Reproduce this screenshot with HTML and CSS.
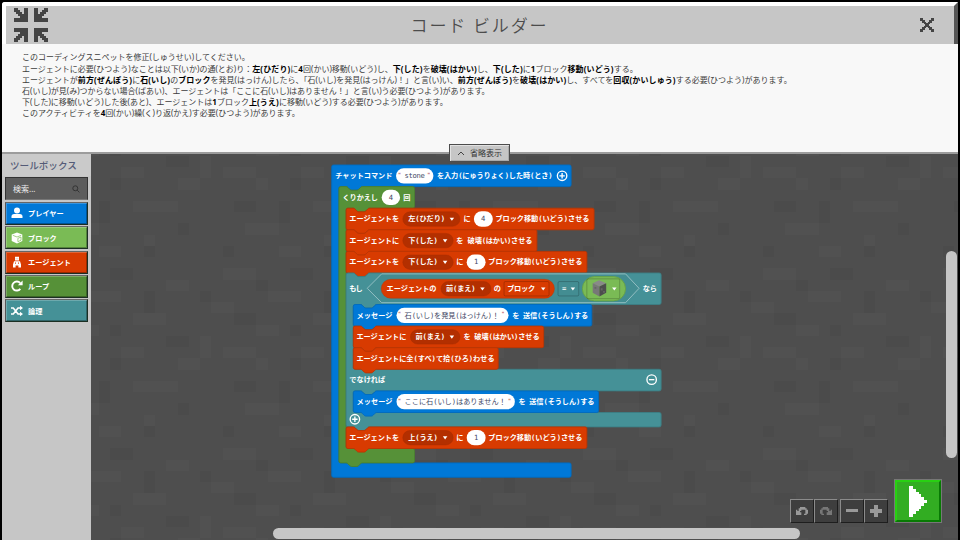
FILE: index.html
```
<!DOCTYPE html>
<html lang="ja">
<head>
<meta charset="utf-8">
<title>コード ビルダー</title>
<link rel="stylesheet" href="styles.css">
</head>
<body>
<div class="window">
  <header class="header">
    <svg class="shrink" viewBox="0 0 17 17" shape-rendering="crispEdges">
      <defs><path id="arrow" d="M0 0H2V1H3V2H4V3H5V0H7V7H0V5H3V4H2V3H1V2H0Z"/></defs>
      <use href="#arrow"/><use href="#arrow" transform="matrix(-1 0 0 1 17 0)"/>
      <use href="#arrow" transform="matrix(1 0 0 -1 0 17)"/><use href="#arrow" transform="matrix(-1 0 0 -1 17 17)"/>
    </svg>
    <h1 class="title">コード ビルダー</h1>
    <svg class="close" viewBox="0 0 14 14"><path d="M0 0H3V2H5V4H6V5H8V4H9V2H11V0H14V3H12V5H10V6H9V8H10V9H12V11H14V14H11V12H9V10H8V9H6V10H5V12H3V14H0V11H2V9H4V8H5V6H4V5H2V3H0Z"/></svg>
  </header>
  <section class="hint">
    <p>このコーディングスニペットを修正(しゅうせい)してください。</p>
    <p>エージェントに必要(ひつよう)なことは以下(いか)の通(とお)り：<b>左(ひだり)</b>に<b>4</b>回(かい)移動(いどう)し、<b>下(した)</b>を<b>破壊(はかい)</b>し、<b>下(した)</b>に<b>1</b>ブロック<b>移動(いどう)</b>する。</p>
    <p>エージェントが<b>前方(ぜんぽう)</b>に<b>石(いし)</b>の<b>ブロック</b>を発見(はっけん)したら、「石(いし)を発見(はっけん)！」と言(い)い、<b>前方(ぜんぽう)</b>を<b>破壊(はかい)</b>し、すべてを<b>回収(かいしゅう)</b>する必要(ひつよう)があります。</p>
    <p>石(いし)が見(み)つからない場合(ばあい)、エージェントは「ここに石(いし)はありません！」と言(い)う必要(ひつよう)があります。</p>
    <p>下(した)に移動(いどう)した後(あと)、エージェントは<b>1</b>ブロック<b>上(うえ)</b>に移動(いどう)する必要(ひつよう)があります。</p>
    <p>このアクティビティを<b>4</b>回(かい)繰(く)り返(かえ)す必要(ひつよう)があります。</p>
    <button class="collapse"><svg viewBox="0 0 8 5"><path d="M1 4L4 1L7 4"/></svg>省略表示</button>
  </section>
  <main class="editor">
    <aside class="toolbox">
      <h2>ツールボックス</h2>
      <div class="search"><span>検索...</span><svg viewBox="0 0 9 9"><circle cx="3.7" cy="3.7" r="2.8"/><path d="M5.8 5.8L8.3 8.3"/></svg></div>
      <button class="cat player"><svg viewBox="0 0 12 12"><circle cx="6" cy="3.6" r="3"/><path d="M.5 11V9.5Q.5 7 3.2 7H8.8Q11.5 7 11.5 9.5V11Z"/></svg>プレイヤー</button>
      <button class="cat blocks"><svg viewBox="0 0 12 12"><path d="M6 .5L11.3 2.6V9L6 11.6L.7 9V2.6Z"/><path class="cut" d="M1.8 3.3L6 5L10.2 3.3M6.9 6.3L10 5V8.2L6.9 9.7Z"/></svg>ブロック</button>
      <button class="cat agent"><svg viewBox="0 0 12 12"><path d="M4 .8H8V4.6H4ZM3 5.2H9L10 8.6V11.6H7.4V9.4H4.6V11.6H2V8.6Z"/><path class="cut" d="M4.8 2.8H5.4M6.6 2.8H7.2M4.5 6.3V8M7.5 6.3V8"/></svg>エージェント</button>
      <button class="cat loops"><svg viewBox="0 0 12 12"><path class="line" d="M9.3 8.8A4.5 4.5 0 1 1 9.2 3.2"/><path d="M11.6 .6V5.3H6.9Z"/></svg>ループ</button>
      <button class="cat logic"><svg viewBox="0 0 12 12"><path class="thin" d="M0 3H2.3L7 9H9.4M0 9H2.3L7 3H9.4"/><path d="M9 .8L12 3L9 5.2ZM9 6.8L12 9L9 11.2Z"/></svg>論理</button>
    </aside>
    <div class="workspace">
      <svg class="canvas" viewBox="91 154 867 386">
        <defs>
          <pattern id="stone" patternUnits="userSpaceOnUse" x="560" y="167" width="180" height="180">
            <g transform="scale(11.25)" shape-rendering="crispEdges">
              <path fill="#515151" d="M2 0h3v1H2zM9 0h2v1H9zM5 1h1v1H5zM14 1h2v1h-2zM0 0h1v1H0zM0 15h1v1H0zM10 3h4v1h-4zM4 5h3v1H4zM11 6h1v1h-1zM7 7h2v1H7zM2 9h3v1H2zM13 10h2v1h-2zM6 11h3v1H6zM1 12h2v1H1zM10 13h3v1h-3zM5 14h2v1H5z"/>
              <path fill="#4b4b4b" d="M7 3h1v2H7zM11 7h1v1h-1zM3 3h2v1H3zM14 5h1v1h-1zM2 7h1v1H2zM8 9h2v1H8zM5 10h1v1H5zM0 11h1v1H0zM11 11h1v2h-1zM3 13h2v1H3zM8 14h1v1H8zM13 15h2v1h-2zM8 1h1v1H8z"/>
            </g>
          </pattern>
          <path id="caret" d="M-5-3H5L0 4Z"/>
          <g id="add"><circle r="10.5"/><path d="M-6 0H6M0-6V6"/></g>
        </defs>
        <rect x="91" y="154" width="867" height="386" fill="#4e4e4e"/>
        <rect x="91" y="154" width="867" height="386" fill="url(#stone)"/>
        <g transform="translate(331.7 165) scale(.45)">
          <!-- on chat command -->
          <path class="b blue" d="M0 4a4 4 0 0 1 4-4H528a4 4 0 0 1 4 4V44a4 4 0 0 1-4 4H68c-2,0 -3,1 -4,2l-4,4c-1,1 -2,2 -4,2h-12c-2,0 -3,-1 -4,-2l-4,-4c-1,-1 -2,-2 -4,-2H20a4 4 0 0 0-4 4V658a4 4 0 0 0 4 4H528a4 4 0 0 1 4 4V690a4 4 0 0 1-4 4H4a4 4 0 0 1-4-4Z"/>
          <!-- repeat -->
          <path class="b green" transform="translate(16 48)" d="M0 4a4 4 0 0 1 4-4H16c2,0 3,1 4,2l4,4c1,1 2,2 4,2h12c2,0 3,-1 4,-2l4,-4c1,-1 2,-2 4,-2H164a4 4 0 0 1 4 4V44a4 4 0 0 1-4 4H68c-2,0 -3,1 -4,2l-4,4c-1,1 -2,2 -4,2h-12c-2,0 -3,-1 -4,-2l-4,-4c-1,-1 -2,-2 -4,-2H20a4 4 0 0 0-4 4V578a4 4 0 0 0 4 4H164a4 4 0 0 1 4 4V610a4 4 0 0 1-4 4H52c-2,0 -3,1 -4,2l-4,4c-1,1 -2,2 -4,2h-12c-2,0 -3,-1 -4,-2l-4,-4c-1,-1 -2,-2 -4,-2H4a4 4 0 0 1-4-4Z"/>
          <!-- agent rows -->
          <path class="b orange" transform="translate(32 96)" d="M0 4a4 4 0 0 1 4-4H16c2,0 3,1 4,2l4,4c1,1 2,2 4,2h12c2,0 3,-1 4,-2l4,-4c1,-1 2,-2 4,-2H547a4 4 0 0 1 4 4V44a4 4 0 0 1-4 4H52c-2,0 -3,1 -4,2l-4,4c-1,1 -2,2 -4,2h-12c-2,0 -3,-1 -4,-2l-4,-4c-1,-1 -2,-2 -4,-2H4a4 4 0 0 1-4-4Z"/>
          <path class="b orange" transform="translate(32 144)" d="M0 4a4 4 0 0 1 4-4H16c2,0 3,1 4,2l4,4c1,1 2,2 4,2h12c2,0 3,-1 4,-2l4,-4c1,-1 2,-2 4,-2H420a4 4 0 0 1 4 4V44a4 4 0 0 1-4 4H52c-2,0 -3,1 -4,2l-4,4c-1,1 -2,2 -4,2h-12c-2,0 -3,-1 -4,-2l-4,-4c-1,-1 -2,-2 -4,-2H4a4 4 0 0 1-4-4Z"/>
          <path class="b orange" id="move" transform="translate(32 192)" d="M0 4a4 4 0 0 1 4-4H16c2,0 3,1 4,2l4,4c1,1 2,2 4,2h12c2,0 3,-1 4,-2l4,-4c1,-1 2,-2 4,-2H531a4 4 0 0 1 4 4V44a4 4 0 0 1-4 4H52c-2,0 -3,1 -4,2l-4,4c-1,1 -2,2 -4,2h-12c-2,0 -3,-1 -4,-2l-4,-4c-1,-1 -2,-2 -4,-2H4a4 4 0 0 1-4-4Z"/>
          <!-- if / else -->
          <path class="b teal" transform="translate(32 240)" d="M0 4a4 4 0 0 1 4-4H16c2,0 3,1 4,2l4,4c1,1 2,2 4,2h12c2,0 3,-1 4,-2l4,-4c1,-1 2,-2 4,-2H696a4 4 0 0 1 4 4V66a4 4 0 0 1-4 4H68c-2,0 -3,1 -4,2l-4,4c-1,1 -2,2 -4,2h-12c-2,0 -3,-1 -4,-2l-4,-4c-1,-1 -2,-2 -4,-2H20a4 4 0 0 0-4 4V210a4 4 0 0 0 4 4H696a4 4 0 0 1 4 4V258a4 4 0 0 1-4 4H68c-2,0 -3,1 -4,2l-4,4c-1,1 -2,2 -4,2h-12c-2,0 -3,-1 -4,-2l-4,-4c-1,-1 -2,-2 -4,-2H20a4 4 0 0 0-4 4V306a4 4 0 0 0 4 4H696a4 4 0 0 1 4 4V338a4 4 0 0 1-4 4H52c-2,0 -3,1 -4,2l-4,4c-1,1 -2,2 -4,2h-12c-2,0 -3,-1 -4,-2l-4,-4c-1,-1 -2,-2 -4,-2H4a4 4 0 0 1-4-4Z"/>
          <path class="b blue" transform="translate(48 310)" d="M0 4a4 4 0 0 1 4-4H16c2,0 3,1 4,2l4,4c1,1 2,2 4,2h12c2,0 3,-1 4,-2l4,-4c1,-1 2,-2 4,-2H526a4 4 0 0 1 4 4V44a4 4 0 0 1-4 4H52c-2,0 -3,1 -4,2l-4,4c-1,1 -2,2 -4,2h-12c-2,0 -3,-1 -4,-2l-4,-4c-1,-1 -2,-2 -4,-2H4a4 4 0 0 1-4-4Z"/>
          <path class="b orange" transform="translate(48 358)" d="M0 4a4 4 0 0 1 4-4H16c2,0 3,1 4,2l4,4c1,1 2,2 4,2h12c2,0 3,-1 4,-2l4,-4c1,-1 2,-2 4,-2H419a4 4 0 0 1 4 4V44a4 4 0 0 1-4 4H52c-2,0 -3,1 -4,2l-4,4c-1,1 -2,2 -4,2h-12c-2,0 -3,-1 -4,-2l-4,-4c-1,-1 -2,-2 -4,-2H4a4 4 0 0 1-4-4Z"/>
          <path class="b orange" transform="translate(48 406)" d="M0 4a4 4 0 0 1 4-4H16c2,0 3,1 4,2l4,4c1,1 2,2 4,2h12c2,0 3,-1 4,-2l4,-4c1,-1 2,-2 4,-2H318a4 4 0 0 1 4 4V44a4 4 0 0 1-4 4H52c-2,0 -3,1 -4,2l-4,4c-1,1 -2,2 -4,2h-12c-2,0 -3,-1 -4,-2l-4,-4c-1,-1 -2,-2 -4,-2H4a4 4 0 0 1-4-4Z"/>
          <path class="b blue" transform="translate(48 502)" d="M0 4a4 4 0 0 1 4-4H16c2,0 3,1 4,2l4,4c1,1 2,2 4,2h12c2,0 3,-1 4,-2l4,-4c1,-1 2,-2 4,-2H541a4 4 0 0 1 4 4V44a4 4 0 0 1-4 4H52c-2,0 -3,1 -4,2l-4,4c-1,1 -2,2 -4,2h-12c-2,0 -3,-1 -4,-2l-4,-4c-1,-1 -2,-2 -4,-2H4a4 4 0 0 1-4-4Z"/>
          <use href="#move" y="390"/>

          <g class="t">
            <g transform="translate(0 29)">
              <text x="8" textLength="127">チャットコマンド</text>
              <rect class="val" x="143" y="-22" width="83" height="34" rx="17"/>
              <text class="q" x="147" y="-3">"</text><text class="dark" x="162" textLength="45">stone</text><text class="q" x="212" y="-3">"</text>
              <text x="234" textLength="257">を入力(にゅうりょく)した時(とき)</text>
              <use class="round" href="#add" x="512" y="-5"/>
            </g>
            <g transform="translate(0 77)">
              <text x="24" textLength="79">くりかえし</text>
              <rect class="val" x="111" y="-22" width="41" height="34" rx="17"/><text class="dark" x="127">4</text>
              <text x="159">回</text>
            </g>
            <g transform="translate(0 125)">
              <text x="39" textLength="111">エージェントを</text>
              <rect class="drop" x="158" y="-21" width="127" height="32" rx="16"/><text x="170" textLength="82">左(ひだり)</text><use href="#caret" x="267" y="-5"/>
              <text x="293">に</text>
              <rect class="val" x="316" y="-22" width="42" height="34" rx="17"/><text class="dark" x="332">4</text>
              <text x="364" textLength="209">ブロック移動(いどう)させる</text>
            </g>
            <g transform="translate(0 173)">
              <text x="39" textLength="111">エージェントに</text>
              <rect class="drop" x="158" y="-21" width="112" height="32" rx="16"/><text x="170" textLength="66">下(した)</text><use href="#caret" x="252" y="-5"/>
              <text x="277">を</text><text x="302" textLength="144">破壊(はかい)させる</text>
            </g>
            <g transform="translate(0 221)">
              <text x="39" textLength="111">エージェントを</text>
              <rect class="drop" x="158" y="-21" width="112" height="32" rx="16"/><text x="170" textLength="66">下(した)</text><use href="#caret" x="252" y="-5"/>
              <text x="277">に</text>
              <rect class="val" x="300" y="-22" width="42" height="34" rx="17"/><text class="dark" x="316">1</text>
              <text x="348" textLength="209">ブロック移動(いどう)させる</text>
            </g>
            <g transform="translate(0 280)">
              <text x="39" textLength="30">もし</text>
              <path class="hex" d="M79-6L111-38H653L683-6L653 26H111Z"/>
              <rect class="orange rim" x="110" y="-26" width="385" height="42" rx="21"/>
              <text x="122" textLength="111">エージェントの</text>
              <rect class="drop" x="243" y="-21" width="111" height="32" rx="16"/><text x="254" textLength="66">前(まえ)</text><use href="#caret" x="335" y="-5"/>
              <text x="360">の</text>
              <rect class="field" x="383" y="-21" width="100" height="32" rx="3"/><text x="390" textLength="62">ブロック</text><use href="#caret" x="470" y="-5"/>
              <rect class="field" x="503" y="-21" width="46" height="32" rx="3"/><text x="512">=</text><use href="#caret" x="536" y="-5"/>
              <rect class="lime" x="557" y="-32" width="96" height="54" rx="27"/>
              <rect class="field" x="567" y="-27" width="73" height="44" rx="3"/>
              <path fill="#898989" d="M594-24L610-17L595-10L580-17Z"/><path fill="#777" d="M580-17L595-10V12L580 4Z"/><path fill="#4d4d4d" d="M595-10L610-17V4L595 12Z"/>
              <path fill="#656565" d="M598-6h4v5h-4zM603 0h4v4h-4zM584-9h4v4h-4z"/>
              <use href="#caret" x="628" y="-5"/>
              <text x="691" textLength="32">なら</text>
            </g>
            <g transform="translate(0 339)">
              <text x="55" textLength="80">メッセージ</text>
              <rect class="val" x="144" y="-22" width="249" height="34" rx="17"/>
              <text class="q" x="147" y="-3">"</text><text class="dark" x="162" textLength="210">石(いし)を発見(はっけん)！</text><text class="q" x="377" y="-3">"</text>
              <text x="401">を</text><text x="425" textLength="145">送信(そうしん)する</text>
            </g>
            <g transform="translate(0 387)">
              <text x="55" textLength="111">エージェントに</text>
              <rect class="drop" x="175" y="-21" width="110" height="32" rx="16"/><text x="186" textLength="66">前(まえ)</text><use href="#caret" x="267" y="-5"/>
              <text x="293">を</text><text x="317" textLength="145">破壊(はかい)させる</text>
            </g>
            <g transform="translate(0 435)"><text x="55" textLength="307">エージェントに全(すべ)て拾(ひろ)わせる</text></g>
            <g transform="translate(0 483)">
              <text x="39" textLength="80">でなければ</text>
              <g class="round" transform="translate(711 -6)"><circle r="10.5"/><path d="M-6 0H6"/></g>
            </g>
            <g transform="translate(0 531)">
              <text x="55" textLength="80">メッセージ</text>
              <rect class="val" x="144" y="-22" width="263" height="34" rx="17"/>
              <text class="q" x="147" y="-3">"</text><text class="dark" x="162" textLength="225">ここに石(いし)はありません！</text><text class="q" x="391" y="-3">"</text>
              <text x="415">を</text><text x="439" textLength="145">送信(そうしん)する</text>
            </g>
            <use class="round" href="#add" x="51.5" y="565"/>
            <g transform="translate(0 611)">
              <text x="39" textLength="111">エージェントを</text>
              <rect class="drop" x="158" y="-21" width="112" height="32" rx="16"/><text x="170" textLength="66">上(うえ)</text><use href="#caret" x="252" y="-5"/>
              <text x="277">に</text>
              <rect class="val" x="300" y="-22" width="42" height="34" rx="17"/><text class="dark" x="316">1</text>
              <text x="348" textLength="209">ブロック移動(いどう)させる</text>
            </g>
          </g>
        </g>
      </svg>
      <i class="bar vertical"></i><i class="bar horizontal"></i>
      <div class="controls">
        <div class="pair">
          <button class="tool"><svg viewBox="0 0 9 6"><path d="M3 0h4v1h1v1h1v3H8v1H6V5h1V2H4v1H3v1h1v2H0V2h1v1h1V1h1z"/></svg></button>
          <button class="tool dim"><svg viewBox="0 0 9 6"><path transform="matrix(-1 0 0 1 9 0)" d="M3 0h4v1h1v1h1v3H8v1H6V5h1V2H4v1H3v1h1v2H0V2h1v1h1V1h1z"/></svg></button>
        </div>
        <div class="pair">
          <button class="tool"><svg viewBox="0 0 12 12"><path d="M0 4h12v3H0z"/></svg></button>
          <button class="tool"><svg viewBox="0 0 12 12"><path d="M4 0h4v4h4v4H8v4H4V8H0V4h4z"/></svg></button>
        </div>
        <button class="play"><svg viewBox="0 0 18 31"><path d="M0 0H4V3H7V6H10V8H12V11H15V14H18V17H15V20H12V23H10V25H7V28H4V31H0Z"/></svg></button>
      </div>
    </div>
  </main>
</div>
</body>
</html>
```
FILE: styles.css
```
* { box-sizing: border-box; }
body {
  margin: 0;
  width: 960px;
  height: 540px;
  overflow: hidden;
  background: #000;
  font-family: "Noto Sans", "Noto Sans CJK JP", sans-serif;
}
h1, h2, p { margin: 0; }
button { padding: 0; font: inherit; }
.window {
  display: flex;
  flex-direction: column;
  height: 540px;
  padding: 2px 2px 0;
}
.header {
  display: flex;
  align-items: center;
  flex: 0 0 42px;
  padding: 0 20px 0 8px;
  background: #c6c6c6;
  border-top: 4px solid #fff;
  border-left: 4px solid #fff;
  border-right: 4px solid #555;
  border-top-left-radius: 3px;
}
.shrink { width: 34px; height: 34px; fill: #444; }
.title {
  flex: 1;
  padding-right: 9px;
  text-align: center;
  font: 350 17px/38px "Noto Sans CJK JP", sans-serif;
  letter-spacing: 1.9px;
  color: #4c4c4c;
}
.close { width: 14px; height: 14px; fill: #444; }
.hint {
  position: relative;
  flex: 0 0 110px;
  padding: 7.4px 20px 0;
  background: #f8f8f8;
  border-bottom: 2px solid #9c9c9c;
  font: 8px/11.2px "Noto Sans", "Noto Sans CJK JP", sans-serif;
  color: #3c3c3c;
  white-space: nowrap;
}
.hint b { color: #000; letter-spacing: .11px; }
.collapse {
  position: absolute;
  left: 447px;
  top: 100px;
  z-index: 2;
  display: flex;
  align-items: center;
  justify-content: center;
  gap: 5px;
  width: 61px;
  height: 18px;
  background: #c6c6c6;
  border: 1px solid #4c4c4c;
  box-shadow: inset 1px 1px #e2e2e2, inset -1px -1px #aaa;
  font-size: 8px;
  color: #333;
}
.collapse svg { width: 8px; fill: none; stroke: #444; stroke-width: 1; }
.editor { display: flex; flex: 1; min-height: 0; }
.toolbox {
  flex: 0 0 89px;
  display: flex;
  flex-direction: column;
  gap: 1.2px;
  padding: 0 3px;
  background: #c6c6c6;
}
.toolbox h2 {
  height: 22px;
  margin: 0 -3px;
  padding-left: 8px;
  background: #cacaca;
  font: 500 9.6px/22.5px "Noto Sans CJK JP", sans-serif;
  color: #545b77;
}
.search {
  display: flex;
  align-items: center;
  justify-content: space-between;
  flex: 0 0 23px;
  margin-bottom: .4px;
  padding: 0 7px 0 7px;
  background: #5c5c5c;
  border: 1px solid #333;
  border-bottom-color: #777;
  font-size: 8px;
  color: #eee;
}
.search svg { width: 8px; fill: none; stroke: #333; stroke-width: 1.1; }
.cat {
  display: flex;
  align-items: center;
  gap: 5px;
  flex: 0 0 23.2px;
  padding-left: 5px;
  border: 1px solid #1b2f23;
  border-top-color: #666;
  border-left-color: #555;
  box-shadow: inset 1px 1px rgba(255,255,255,.22), inset -1px -1px rgba(0,0,0,.3);
  font: bold 7.2px "Noto Sans CJK JP", sans-serif;
  color: #fff;
}
.cat svg { width: 12px; height: 12px; fill: #fff; }
.cat .cut { fill: none; stroke: #d94003; stroke-width: .7; }
.blocks .cut { stroke: #7dbb55; }
.cat .line { fill: none; stroke: #fff; stroke-width: 1.9; }
.cat .thin { fill: none; stroke: #fff; stroke-width: 1.6; }
.player { background: #0078d7; }
.blocks { background: #7abb55; }
.agent { background: #d83b01; }
.loops { background: #569138; }
.logic { background: #459197; }
.workspace { position: relative; flex: 1; overflow: hidden; }
.canvas { display: block; width: 867px; height: 386px; }
.b { stroke-width: 2; }
.blue { fill: #0078d7; stroke: #006bc0; }
.green { fill: #569138; stroke: #4b8030; }
.orange { fill: #d83b01; stroke: #bb3503; }
.teal { fill: #459197; stroke: #3c7f85; }
.lime { fill: #7abb55; stroke: #66a244; stroke-width: 2; }
.t {
  font: bold 16px "DejaVu Sans Mono", "Noto Sans CJK JP", monospace;
  fill: #fff;
}
.t .orange { fill: #d83b01; }
.val { fill: #fff; }
.drop { fill: #b32f00; stroke: #a62c00; }
.field { fill: none; stroke: #000; stroke-opacity: .3; stroke-width: 1.5; }
.hex { fill: #438d92; stroke: #9bc3c6; stroke-width: 2; }
.dark { font-weight: normal; fill: #414765; }
.q { font-size: 13px; font-weight: normal; fill: #a31515; }
.round { fill: none; stroke: #fff; stroke-width: 3; }
.bar { position: absolute; border-radius: 6px; background: #c6c6c6; }
.vertical { right: 1px; top: 97px; width: 11px; height: 207px; }
.horizontal { left: 182px; bottom: 1px; width: 527px; height: 11px; }
.controls {
  position: absolute;
  right: 16px;
  bottom: 17px;
  display: flex;
  align-items: flex-end;
}
.pair { display: flex; margin-right: 2px; }
.pair + .pair { margin-right: 6px; }
.tool {
  display: grid;
  place-items: center;
  width: 24px;
  height: 24px;
  background: #3e3e3e;
  border: 1px solid #8b8b8b;
  border-right-color: #1e1e1e;
  border-bottom-color: #1e1e1e;
}
.tool svg { width: 12px; fill: #999; }
.dim svg { fill: #777; }
.play {
  display: grid;
  place-items: center;
  width: 48px;
  height: 44px;
  background: #32ad22;
  border: 3px solid #28d012;
  border-right-color: #087a04;
  border-bottom-color: #087a04;
  outline: 1px solid #777;
  outline-offset: -1px;
}
.play svg { width: 18px; height: 31px; fill: #fff; }
```
